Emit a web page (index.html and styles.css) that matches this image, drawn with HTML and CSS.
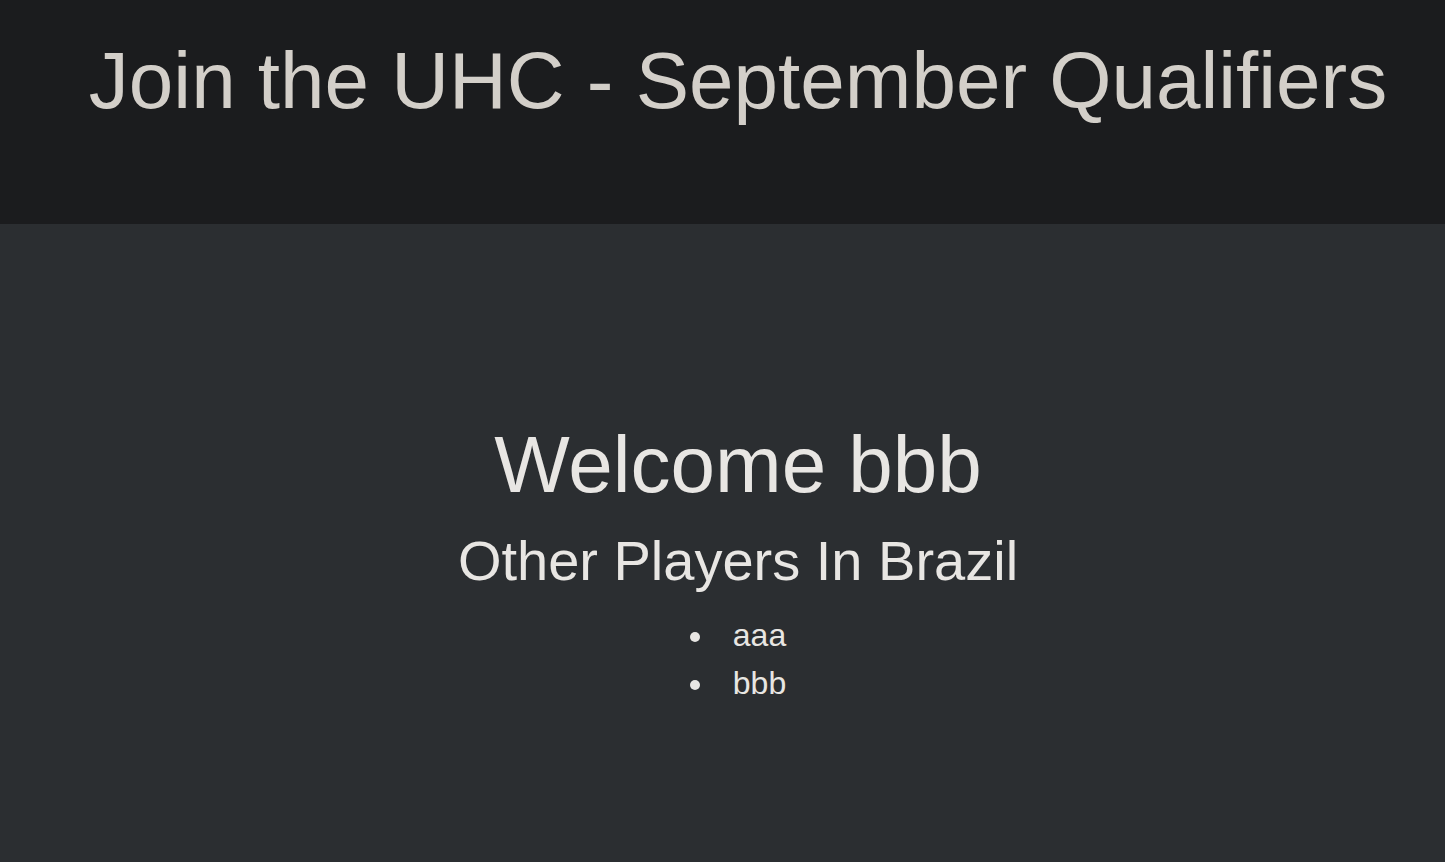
FILE: index.html
```html
<!DOCTYPE html>
<html>
<head>
<meta charset="utf-8">
<title>UHC</title>
<link rel="stylesheet" href="styles.css">
</head>
<body>
<header class="top">
  <h1 class="title">Join the UHC - September Qualifiers</h1>
</header>
<main class="content">
  <h1 class="welcome">Welcome bbb</h1>
  <h2 class="subtitle">Other Players In Brazil</h2>
  <ul class="players">
    <li>aaa</li>
    <li>bbb</li>
  </ul>
</main>
</body>
</html>
```
FILE: styles.css
```css
html, body {
  margin: 0;
  padding: 0;
  height: 100%;
}
body {
  font-family: "Liberation Sans", Arial, sans-serif;
  background: #2b2e31;
  color: #e8e6e3;
  display: flex;
  flex-direction: column;
}
.top {
  background: #1b1c1e;
  height: 224px;
  box-sizing: border-box;
  padding: 35px 0 0 31px;
  text-align: center;
}
.title {
  margin: 0;
  font-size: 80px;
  font-weight: normal;
  line-height: normal;
  color: #d3cfc9;
}
.content {
  flex: 1;
  padding: 195px 0 0 31px;
  text-align: center;
}
.welcome {
  margin: 0;
  font-size: 80px;
  font-weight: normal;
  line-height: normal;
}
.subtitle {
  margin: 17px 0 0;
  font-size: 56px;
  font-weight: normal;
  line-height: normal;
}
.players {
  margin: 18px 0 0;
  padding: 0;
  list-style-position: inside;
  font-size: 32px;
  line-height: 48px;
}
```
